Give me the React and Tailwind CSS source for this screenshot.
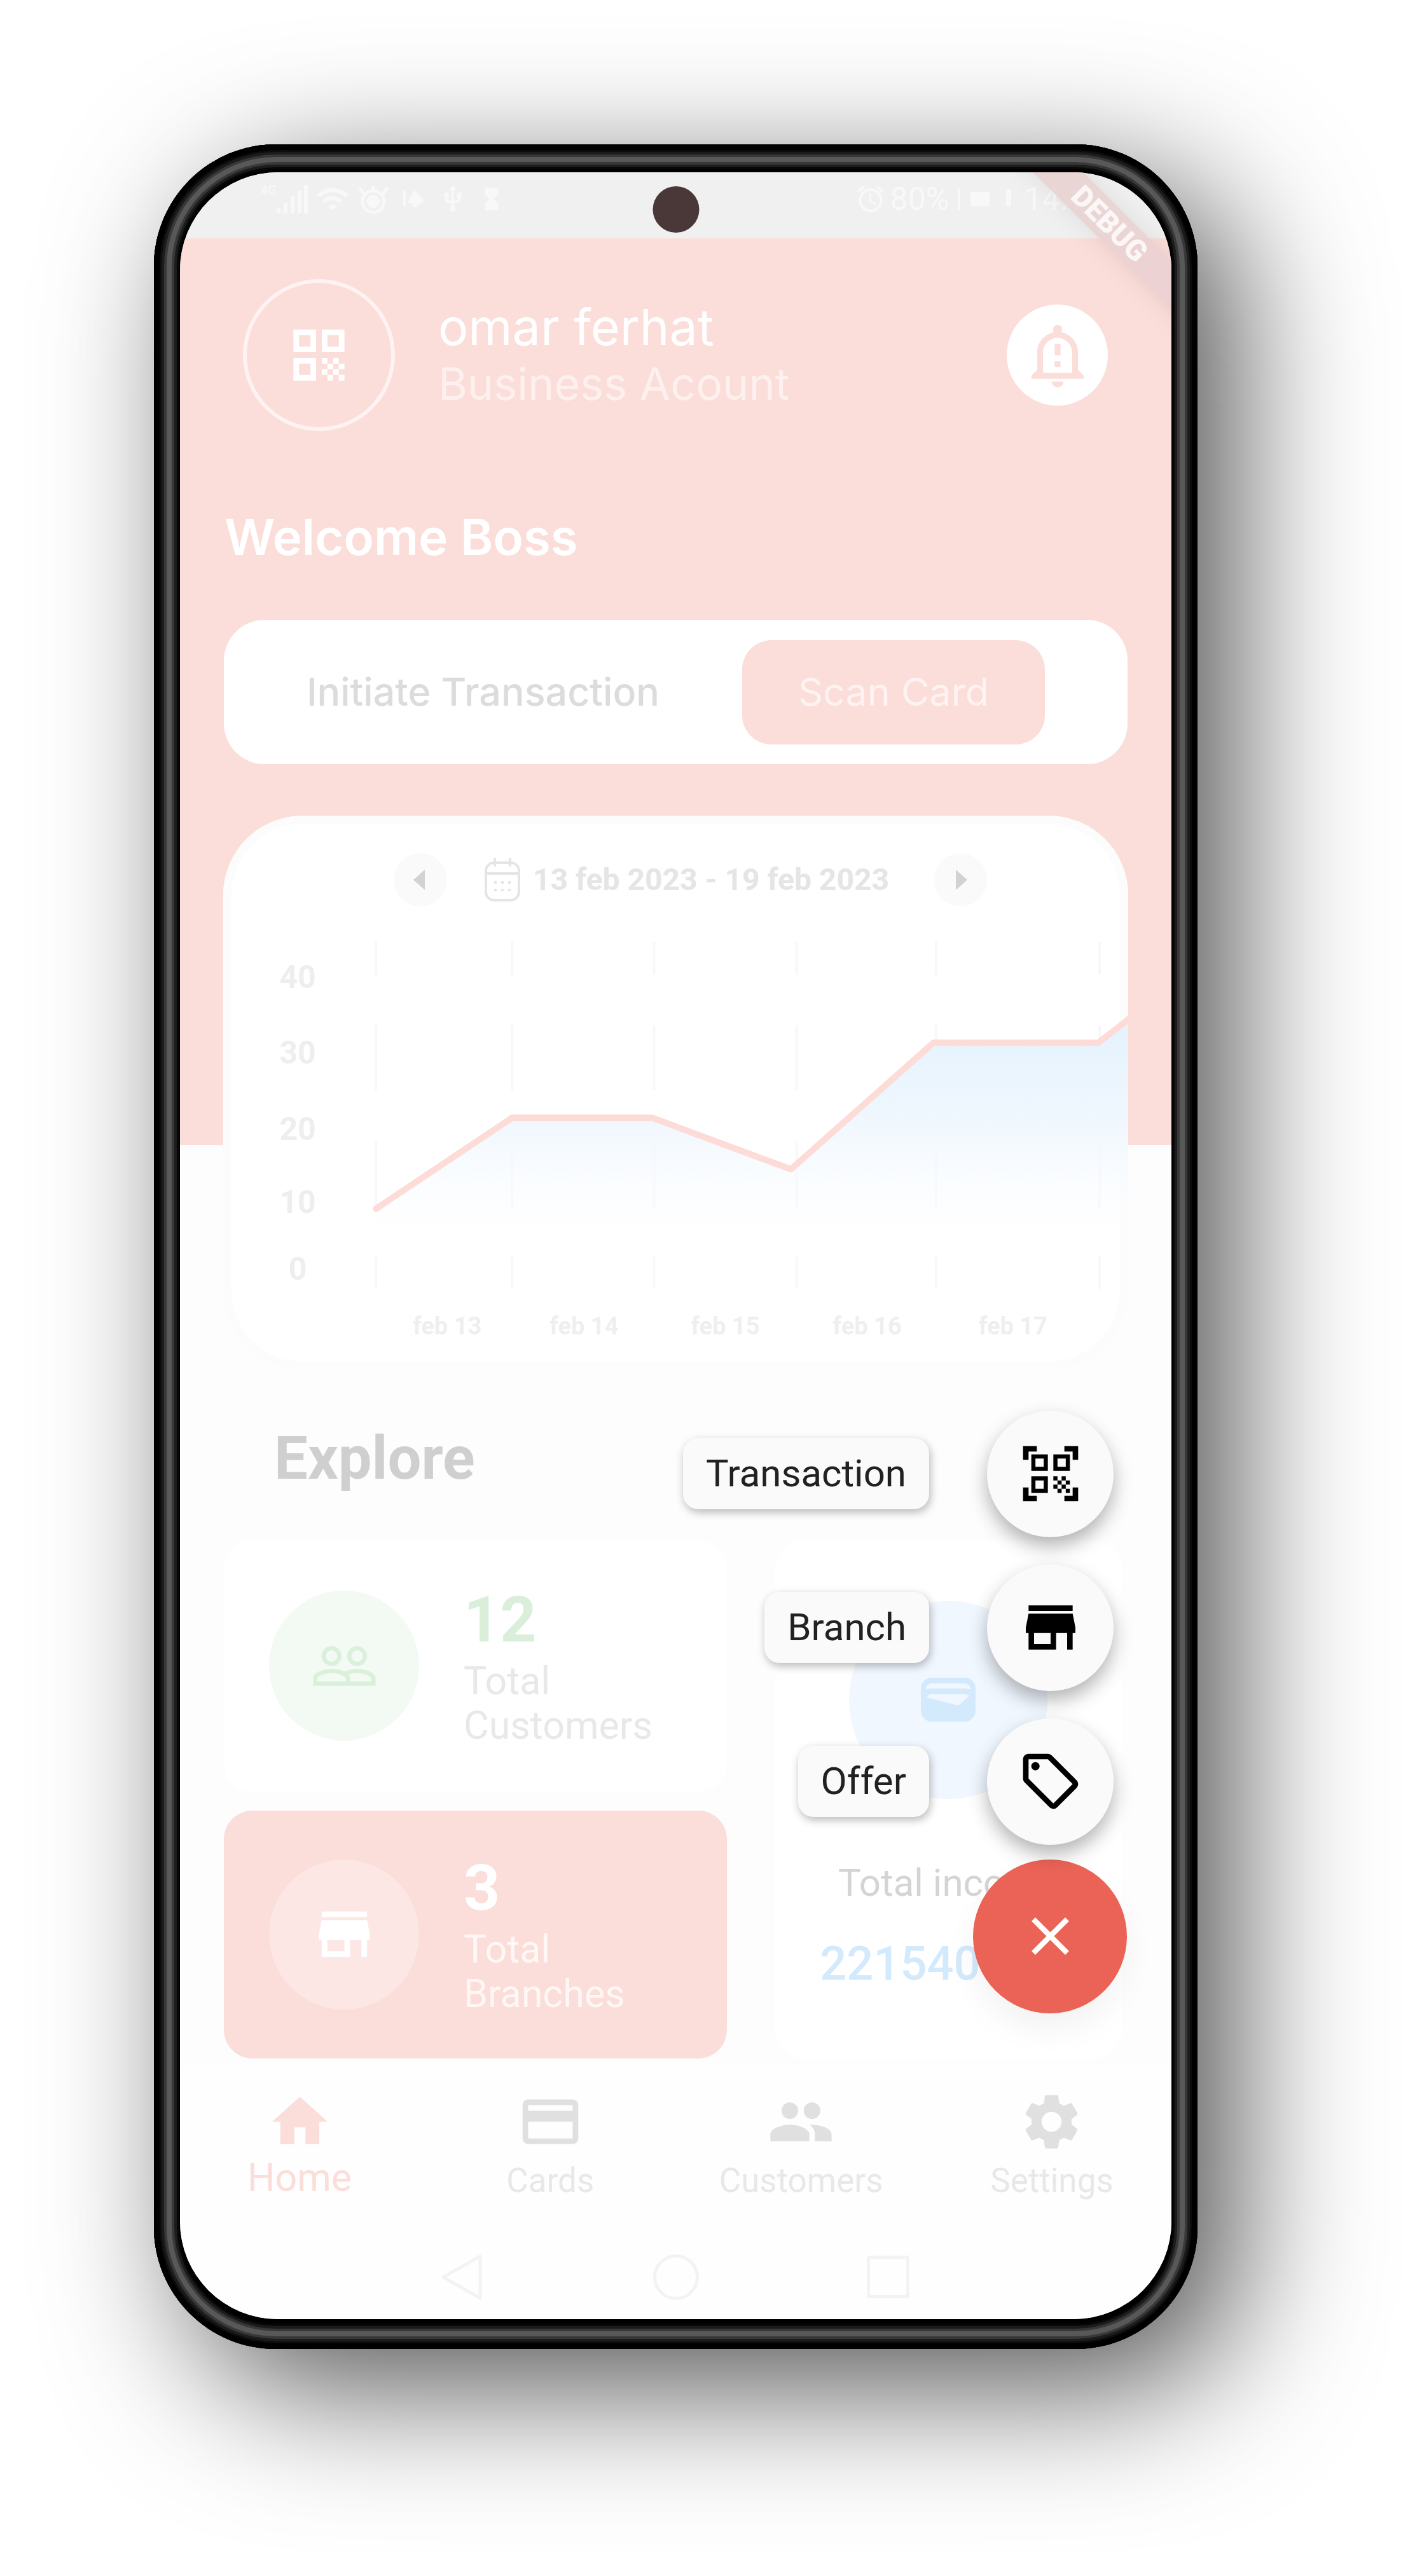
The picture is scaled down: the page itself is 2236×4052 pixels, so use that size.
import React from "react";
import {
  MdQrCode,
  MdQrCodeScanner,
  MdStore,
  MdOutlineLocalOffer,
  MdClose,
  MdHome,
  MdCreditCard,
  MdPeople,
  MdPeopleOutline,
  MdSettings,
  MdOutlineNotificationImportant,
  MdWifi,
  MdUsb,
  MdHourglassFull,
  MdAlarm,
} from "react-icons/md";

function StatusBar() {
  return (
    <div className="flex h-[104px] items-start justify-between bg-[#f0f0f0] pt-[16px] pr-[107px] pl-[127px] text-[#f8f8f8]">
      <div className="flex h-[52px] items-center">
        <span className="self-start text-[20px] leading-[24px] font-medium">4G</span>
        <svg viewBox="0 0 50 44" className="h-[44px] w-[50px]" fill="currentColor" aria-hidden="true">
          <rect x="0" y="36" width="6" height="8" />
          <rect x="11" y="28" width="6" height="16" />
          <rect x="22" y="18" width="6" height="26" />
          <rect x="33" y="9" width="6" height="35" />
          <rect x="43" y="0" width="6" height="44" />
        </svg>
        <MdWifi className="ml-[11px] size-[54px]" />
        <svg viewBox="0 0 50 46" className="ml-[12px] h-[46px] w-[50px]" fill="none" stroke="currentColor" strokeWidth="5" aria-hidden="true">
          <circle cx="25" cy="27" r="17" />
          <circle cx="25" cy="27" r="8" fill="currentColor" />
          <path d="M3 5l7 10M25 2v8M47 5l-7 10" />
        </svg>
        <svg viewBox="0 0 34 34" className="ml-[22px] size-[34px]" fill="currentColor" aria-hidden="true">
          <path d="M0 4h4v24H0zM18 3l15 16-8 7h-4v4h-5v-4l-9-4z" />
        </svg>
        <MdUsb className="ml-[20px] size-[48px]" />
        <MdHourglassFull className="ml-[16px] size-[42px]" />
      </div>
      <div className="flex h-[52px] items-center text-[50px] leading-[52px]">
        <MdAlarm className="size-[50px]" />
        <span className="ml-[6px]">80%</span>
        <svg viewBox="0 0 86 34" className="mr-[18px] ml-[14px] h-[34px] w-[86px]" fill="currentColor" aria-hidden="true">
          <path d="M0 0h4v34H0zM20 6h30v22H20zM76 2h8v26h-8z" />
        </svg>
        <time>14:18</time>
      </div>
    </div>
  );
}

function Header() {
  return (
    <header className="flex items-center pt-[64px] pr-[100px] pl-[99px]">
      <button
        type="button"
        aria-label="Show QR code"
        className="flex size-[239px] shrink-0 items-center justify-center rounded-full border-[6px] border-[#fef3f2] text-white"
      >
        <MdQrCode className="size-[107px]" />
      </button>
      <div className="ml-[68px] flex-1 font-[Inter,sans-serif] leading-[90px]">
        <p className="text-[79px] text-white">omar ferhat</p>
        <p className="text-[70px] text-[#fef0ee]">Business Acount</p>
      </div>
      <button
        type="button"
        aria-label="Notifications"
        className="flex size-[159px] shrink-0 items-center justify-center rounded-full bg-white text-[#fbddd9]"
      >
        <MdOutlineNotificationImportant className="size-[110px]" />
      </button>
    </header>
  );
}

const gridLines = [240, 454, 677, 901, 1120, 1377];
const gridDashes = [
  [53, 105],
  [185, 287],
  [367, 472],
  [548, 599],
];
const valueTicks = [
  [40, 126],
  [30, 245],
  [20, 365],
  [10, 480],
  [0, 585],
];
const dayTicks = [
  ["feb 13", 352],
  ["feb 14", 567],
  ["feb 15", 789],
  ["feb 16", 1012],
  ["feb 17", 1241],
];

function Chart() {
  return (
    <svg viewBox="0 0 1422 726" className="block w-full font-[Roboto,sans-serif]" role="img" aria-label="Transactions per day">
      <defs>
        <linearGradient id="area" gradientUnits="userSpaceOnUse" x1="0" y1="190" x2="0" y2="550">
          <stop offset="0" stopColor="#e5f3fd" />
          <stop offset="0.4" stopColor="#f0f7fe" />
          <stop offset="1" stopColor="#ffffff" stopOpacity="0" />
        </linearGradient>
      </defs>
      {gridLines.map((x) =>
        gridDashes.map(([a, b]) => <line key={`${x}-${a}`} x1={x} x2={x} y1={a} y2={b} stroke="#f8f8f8" strokeWidth="4" />)
      )}
      <path d="M240 473L454 330H674L892 411L1116 212H1375L1422 174V550H240Z" fill="url(#area)" />
      <path d="M240 473L454 330H674L892 411L1116 212H1375L1424 174" fill="none" stroke="#fddcd8" strokeWidth="10" strokeLinejoin="round" strokeLinecap="round" />
      <g fill="#eeeeee" fontSize="50" fontWeight="700" textAnchor="middle">
        {valueTicks.map(([label, y]) => (
          <text key={label} x="117" y={y}>
            {label}
          </text>
        ))}
      </g>
      <g fill="#efefef" fontSize="38" fontWeight="700" textAnchor="middle">
        {dayTicks.map(([label, x]) => (
          <text key={label} x={x} y="671">
            {label}
          </text>
        ))}
      </g>
    </svg>
  );
}

function ChartCard() {
  return (
    <section className="mt-[81px] mr-[68px] ml-[68px] overflow-hidden rounded-[125px] bg-white pt-[57px] shadow-[inset_0_0_0_13px_#fcfcfc]">
      <div className="flex h-[88px] items-center justify-center pl-[46px] text-[#e5e5e5]">
        <button type="button" aria-label="Previous week" className="flex size-[84px] items-center justify-center rounded-full bg-[#fafafa]">
          <svg viewBox="0 0 18 32" className="mr-[4px] h-[32px] w-[18px]" fill="#d2d2d2" aria-hidden="true">
            <path d="M18 0v32L0 16z" />
          </svg>
        </button>
        <svg viewBox="0 0 56 68" className="ml-[59px] h-[68px] w-[56px]" fill="none" stroke="currentColor" strokeWidth="4" aria-hidden="true">
          <rect x="2" y="7" width="52" height="59" rx="13" />
          <path d="M2 24h52M16 0v13M40 0v13" />
          <path d="M15 38h26M15 50h26" strokeDasharray="4 7" />
        </svg>
        <span className="ml-[20px] text-[48px] leading-[56px] font-bold">13 feb 2023 - 19 feb 2023</span>
        <button type="button" aria-label="Next week" className="ml-[70px] flex size-[84px] items-center justify-center rounded-full bg-[#fafafa]">
          <svg viewBox="0 0 18 32" className="ml-[4px] h-[32px] w-[18px]" fill="#d2d2d2" aria-hidden="true">
            <path d="M0 0v32L18 16z" />
          </svg>
        </button>
      </div>
      <Chart />
    </section>
  );
}

function WalletIcon() {
  return (
    <svg viewBox="0 0 86 69" className="h-[69px] w-[86px]" aria-hidden="true">
      <rect width="86" height="69" rx="17" fill="#d3e9fc" />
      <path d="M8 16c1-5 5-7 10-7h50c5 0 9 2 10 7v3c-3-2-6-2-10-2H18c-4 0-7 0-10 2z" fill="#f0f7fe" />
      <path d="M9 31c2-4 5-5 9-5h50c4 0 6 1 8 3L61 42c-1 1-3 2-5 1z" fill="#f0f7fe" />
    </svg>
  );
}

function Explore() {
  return (
    <section>
      <h2 className="mt-[87px] ml-[148px] text-[94px] leading-[104px] font-bold text-[#cfcfcf]">Explore</h2>
      <div className="mt-[77px] mr-[78px] ml-[69px] grid grid-cols-[790fr_545fr] gap-[76px]">
        <div className="flex flex-col gap-[30px]">
          <article className="flex h-[395px] items-center rounded-[45px] bg-white pl-[71px]">
            <div className="flex size-[236px] items-center justify-center rounded-full bg-[#f2faf3] text-[#daf0db]">
              <MdPeopleOutline className="size-[107px]" />
            </div>
            <div className="ml-[70px] pb-[4px]">
              <p className="text-[100px] leading-[122px] font-bold text-[#d9efda]">12</p>
              <p className="w-[320px] text-[61px] leading-[70px] text-[#e8e8e8]">Total Customers</p>
            </div>
          </article>
          <article className="flex h-[390px] items-center rounded-[45px] bg-[#fbddd9] pl-[71px]">
            <div className="flex size-[236px] items-center justify-center rounded-full bg-[#fce7e4] text-white">
              <MdStore className="size-[107px]" />
            </div>
            <div className="ml-[70px] pb-[6px]">
              <p className="text-[100px] leading-[122px] font-bold text-white">3</p>
              <p className="w-[320px] text-[61px] leading-[70px] text-[#fff7f6]">Total Branches</p>
            </div>
          </article>
        </div>
        <article className="flex flex-col items-center rounded-[45px] bg-white pt-[95px]">
          <div className="flex size-[312px] items-center justify-center rounded-full bg-[#f0f7fe]">
            <WalletIcon />
          </div>
          <p className="mt-[97px] text-[60px] leading-[70px] whitespace-nowrap text-[#d4d4d4]">Total income</p>
          <p className="mt-[49px] w-[404px] text-[74px] leading-[86px] font-medium text-[#d3e9fc]">221540</p>
        </article>
      </div>
    </section>
  );
}

const tabs = [
  { label: "Home", Icon: MdHome, active: true },
  { label: "Cards", Icon: MdCreditCard },
  { label: "Customers", Icon: MdPeople },
  { label: "Settings", Icon: MdSettings },
];

function BottomNav() {
  return (
    <nav className="flex items-start justify-between bg-[#fefefe] px-[58px] pt-[36px]">
      {tabs.map(({ label, Icon, active }) => (
        <a
          key={label}
          href="#"
          aria-current={active ? "page" : undefined}
          className={
            active
              ? "flex w-[260px] flex-col items-center text-[61px] leading-[71px] text-[#fbddd9]"
              : "flex w-[260px] flex-col items-center text-[53px] leading-[80px] text-[#e8e8e8]"
          }
        >
          <Icon className={active ? "size-[105px]" : "size-[105px] text-[#e0e0e0]"} />
          {label}
        </a>
      ))}
    </nav>
  );
}

function SystemNav() {
  return (
    <div className="flex items-center justify-center gap-[264px] bg-[#fefefe] pt-[76px] pb-[30px]">
      <button type="button" aria-label="Back">
        <svg viewBox="0 0 72 72" className="size-[72px]" fill="none" stroke="#f3f3f3" strokeWidth="5" strokeLinejoin="round" aria-hidden="true">
          <path d="M64 3v66L6 36z" />
        </svg>
      </button>
      <button type="button" aria-label="Home screen" className="size-[72px] rounded-full border-[5px] border-[#f3f3f3]" />
      <button type="button" aria-label="Recent apps" className="flex size-[72px] items-center">
        <span className="size-[67px] rounded-[4px] border-[5px] border-[#f3f3f3]" />
      </button>
    </div>
  );
}

const actions = [
  { label: "Transaction", Icon: MdQrCodeScanner },
  { label: "Branch", Icon: MdStore },
  { label: "Offer", Icon: MdOutlineLocalOffer },
];

function SpeedDial() {
  return (
    <div className="absolute right-[70px] bottom-[481px] flex flex-col items-end">
      <button
        type="button"
        aria-label="Close menu"
        className="order-2 flex size-[242px] items-center justify-center rounded-full bg-[#eb6356] text-white shadow-[0_26px_50px_rgba(0,0,0,0.05)]"
      >
        <MdClose className="size-[101px]" />
      </button>
      <ul className="relative order-1 mb-[23px] flex flex-col items-end gap-[43px] pr-[21px]">
        {actions.map(({ label, Icon }) => (
          <li key={label} className="flex items-center gap-[91px]">
            <label
              htmlFor={label}
              className="rounded-[24px] bg-[#fafafa] px-[36px] py-[21px] text-[60px] leading-[70px] text-[#212121] shadow-[2px_5px_14px_rgba(0,0,0,0.28)]"
            >
              {label}
            </label>
            <button
              id={label}
              type="button"
              className="flex size-[199px] items-center justify-center rounded-full bg-[#fafafa] text-black shadow-[0_14px_30px_rgba(0,0,0,0.3)]"
            >
              <Icon className="size-[104px]" />
            </button>
          </li>
        ))}
      </ul>
    </div>
  );
}

export default function App() {
  return (
    <div className="bg-white pt-[227px] pr-[353px] pb-[358px] pl-[242px] font-[Roboto,sans-serif]">
      <div className="rounded-[192px] bg-black px-[41px] pt-[44px] pb-[47px] shadow-[inset_0_0_0_9px_#000,inset_0_0_0_12px_#0c0c0c,inset_0_0_0_16px_#1c1c1c,inset_0_0_0_20px_#383838,inset_0_0_0_28px_#585858,inset_0_0_0_32px_#383838,inset_0_0_0_36px_#1c1c1c,inset_0_0_0_39px_#080808,60px_60px_220px_rgba(0,0,0,0.67)]">
        <div className="relative overflow-hidden rounded-[154px] bg-[#fdfdfd]">
          <StatusBar />
          <main className="bg-[linear-gradient(#fbddd9_1426px,#fdfdfd_1426px)] pb-[11px]">
            <Header />
            <h1 className="mt-[119px] ml-[70px] font-[Inter,sans-serif] text-[78px] leading-[96px] font-semibold text-white">Welcome Boss</h1>
            <div className="mx-[69px] mt-[82px] flex h-[227px] items-center justify-evenly rounded-[64px] bg-white font-[Inter,sans-serif] text-[61px]">
              <span className="font-medium text-[#dcdcdc]">Initiate Transaction</span>
              <button type="button" className="h-[164px] rounded-[46px] bg-[#fbddd9] px-[88px] text-[#fef3f2]">
                Scan Card
              </button>
            </div>
            <ChartCard />
            <Explore />
          </main>
          <BottomNav />
          <SystemNav />
          <SpeedDial />
          <div className="absolute -top-[10px] -right-[110px] h-[56px] w-[400px] translate-y-[70px] rotate-45 bg-[#e9d0d0]/85 pr-[20px] text-center text-[46px] leading-[56px] font-black text-[#fcf6f6] shadow-[0_0_40px_rgba(0,0,0,0.08)]">
            DEBUG
          </div>
          <div className="absolute top-[22px] left-1/2 size-[73px] -translate-x-1/2 rounded-full bg-[#4a3838]" />
        </div>
      </div>
    </div>
  );
}
